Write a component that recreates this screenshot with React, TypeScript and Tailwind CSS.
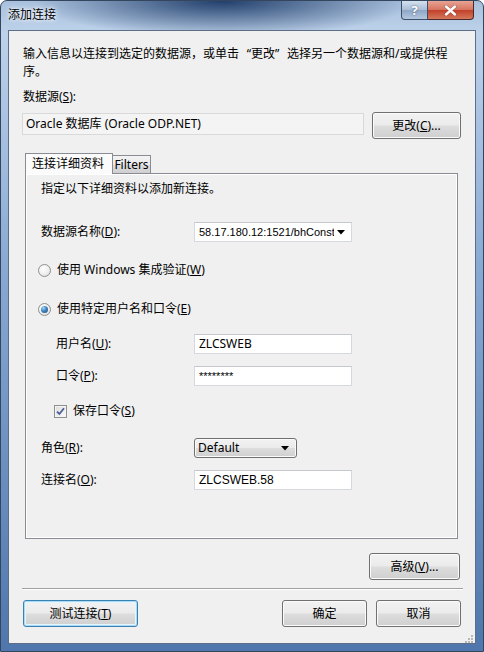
import React from 'react';

function Btn({ children, className = '', focused = false }: { children: React.ReactNode; className?: string; focused?: boolean }) {
  return (
    <div
      className={
        'flex h-[27px] items-center justify-center rounded-[3px] border text-[12px] text-black bg-[linear-gradient(to_bottom,#f2f2f2_0%,#ebebeb_48%,#dddddd_52%,#cfcfcf_100%)] ' +
        (focused
          ? 'border-[#3c7fb1] shadow-[inset_0_0_0_1px_#a6dcf5,inset_0_0_0_2px_#e6f5fc] '
          : 'border-[#707070] shadow-[inset_0_0_0_1px_#fbfbfb] ') +
        className
      }
    >
      {children}
    </div>
  );
}

function TextBox({ children, className = '' }: { children: React.ReactNode; className?: string }) {
  return (
    <div className={'flex h-[20px] w-[158px] items-center border border-[#d5d9de] border-t-[#c4c8ce] bg-white pl-[4px] ' + className}>
      {children}
    </div>
  );
}

function Row({ label, indent = false, children, className = '' }: { label: React.ReactNode; indent?: boolean; children: React.ReactNode; className?: string }) {
  return (
    <div className={'flex h-[20px] items-center ' + className}>
      <div className={'w-[153px] leading-[18px] ' + (indent ? 'pl-[15px]' : '')}>{label}</div>
      {children}
    </div>
  );
}

function Arrow() {
  return (
    <svg width="8" height="5" viewBox="0 0 8 5" className="shrink-0">
      <path d="M0 0H8L4 4.5Z" fill="#000" />
    </svg>
  );
}

function Radio({ checked }: { checked?: boolean }) {
  return (
    <div className="flex h-[13px] w-[13px] items-center justify-center rounded-full border border-[#8e8f8f] bg-[radial-gradient(circle_at_40%_35%,#ffffff_0%,#f0f0f0_50%,#d6d6d6_100%)]">
      {checked && (
        <div className="h-[7px] w-[7px] rounded-full bg-[radial-gradient(circle_at_35%_30%,#a6d6f5_0%,#3e83c0_45%,#1c4a78_100%)]" />
      )}
    </div>
  );
}

function Check() {
  return (
    <div className="flex h-[13px] w-[13px] items-center justify-center border border-[#8e8f8f] bg-[linear-gradient(135deg,#dcdcdc_0%,#fafafa_100%)] shadow-[inset_0_0_0_1px_#f4f4f4]">
      <svg width="9" height="9" viewBox="0 0 9 9">
        <path d="M1 4.6L3.4 7L8 1.2" fill="none" stroke="#4a5f97" strokeWidth="1.8" />
      </svg>
    </div>
  );
}

export default function App() {
  return (
    <div className="h-[652px] w-[484px] overflow-hidden rounded-t-[7px] border border-[#34465e] bg-[radial-gradient(ellipse_190px_36px_at_46%_0%,rgba(22,52,98,0.92),rgba(22,52,98,0)),linear-gradient(to_bottom,#a9c1de_0%,#bed2ea_5%,#8aaad4_40%,#4f77ad_100%)] font-['Noto_Sans','Noto_Sans_CJK_SC',sans-serif] text-[12px] text-black">
      {/* title bar */}
      <div className="flex h-[29px] items-start justify-between">
        <div className="pl-[7px] pt-[5px] leading-[18px] text-[12px] text-black [text-shadow:0_0_6px_#ffffff,0_0_3px_#ffffff]">添加连接</div>
        <div className="mr-[9px] flex h-[19px]">
          <div className="flex w-[27px] items-center justify-center rounded-bl-[4px] border border-t-0 border-[#3c4f6a] bg-[linear-gradient(to_bottom,#d4e0ee_0%,#a9bdd6_50%,#8ea7c6_52%,#b4c8df_100%)] text-[13px] font-bold leading-none text-white [text-shadow:0_0_2px_#3a4f6e]">
            ?
          </div>
          <div className="flex w-[46px] items-center justify-center rounded-br-[4px] border border-l-0 border-t-0 border-[#4a2a2a] bg-[linear-gradient(to_bottom,#e8a493_0%,#d77460_48%,#c2412b_52%,#d5795a_100%)]">
            <svg width="13" height="11" viewBox="0 0 13 11">
              <path d="M2 1.5L11 9.5M11 1.5L2 9.5" stroke="#3a1a1a" strokeWidth="3.4" strokeLinecap="round" opacity="0.35" />
              <path d="M2 1.5L11 9.5M11 1.5L2 9.5" stroke="#ffffff" strokeWidth="2.4" strokeLinecap="round" />
            </svg>
          </div>
        </div>
      </div>

      {/* client area */}
      <div className="mx-[7px] flex h-[614px] flex-col border border-[#5c6f87] bg-[#f0f0f0] px-[14px] pt-[14px]">
        <div className="whitespace-nowrap leading-[18px]">
          输入信息以连接到选定的数据源，或单击<span className="inline-block w-[12px] text-right">“</span>更改
          <span className="inline-block w-[12px] text-left">”</span>选择另一个数据源和/或提供程
          <br />
          序。
        </div>
        <div className="mt-[7px] leading-[18px]">
          数据源(<u>S</u>):
        </div>
        <div className="mt-[6px] flex items-start justify-between">
          <div className="-ml-px mt-px flex h-[22px] w-[342px] items-center border border-[#d9d9d9] bg-[#f4f4f4] pl-[3px]">
            Oracle 数据库 (Oracle ODP.NET)
          </div>
          <Btn className="w-[89px]">
            更改(<u>C</u>)...
          </Btn>
        </div>

        {/* tabs */}
        <div className="ml-[2px] mt-[14px] w-[433px]">
          <div className="flex h-[20px] items-end">
            <div className="relative z-10 -mb-px flex h-[21px] w-[88px] items-start border border-b-0 border-[#898c95] bg-[#fbfbfb] pl-[6px] pt-[1px] leading-[18px]">
              连接详细资料
            </div>
            <div className="flex h-[18px] w-[38px] items-center justify-center border border-l-0 border-b-0 border-[#898c95] bg-[linear-gradient(to_bottom,#f3f3f3_0%,#ebebeb_50%,#dddddd_52%,#cfcfcf_100%)] leading-[16px]">
              Filters
            </div>
          </div>
          <div className="flex h-[366px] flex-col border border-[#898c95] bg-[#f0f0f0] pl-[15px] pt-[6px] shadow-[inset_0_0_0_1px_#ffffff]">
            <div className="leading-[18px]">指定以下详细资料以添加新连接。</div>
            <Row className="mt-[24px]" label={<>数据源名称(<u>D</u>):</>}>
              <TextBox className="gap-[3px] pl-[2px] pr-[6px] font-['Liberation_Sans',sans-serif] text-[11px]">
                <span className="min-w-0 flex-1 overflow-hidden whitespace-nowrap">58.17.180.12:1521/bhConst</span>
                <Arrow />
              </TextBox>
            </Row>
            <div className="-ml-[3px] mt-[19px] flex h-[18px] items-center gap-[6px]">
              <Radio />
              <span className="leading-[18px]">
                使用 Windows 集成验证(<u>W</u>)
              </span>
            </div>
            <div className="-ml-[3px] mt-[21px] flex h-[18px] items-center gap-[6px]">
              <Radio checked />
              <span className="leading-[18px]">
                使用特定用户名和口令(<u>E</u>)
              </span>
            </div>
            <Row className="mt-[16px]" indent label={<>用户名(<u>U</u>):</>}>
              <TextBox>ZLCSWEB</TextBox>
            </Row>
            <Row className="mt-[12px]" indent label={<>口令(<u>P</u>):</>}>
              <TextBox className="items-start pt-[1px] font-['Liberation_Sans',sans-serif] text-[11px]">********</TextBox>
            </Row>
            <div className="ml-[13px] mt-[16px] flex h-[18px] items-center gap-[6px]">
              <Check />
              <span className="leading-[18px]">
                保存口令(<u>S</u>)
              </span>
            </div>
            <Row className="mt-[18px]" label={<>角色(<u>R</u>):</>}>
              <div className="flex h-[20px] w-[103px] items-center justify-between rounded-[3px] border border-[#707070] bg-[linear-gradient(to_bottom,#f2f2f2_0%,#ebebeb_48%,#dddddd_52%,#cfcfcf_100%)] pl-[3px] pr-[7px] shadow-[inset_0_0_0_1px_#fbfbfb]">
                <span>Default</span>
                <Arrow />
              </div>
            </Row>
            <Row className="mt-[12px]" label={<>连接名(<u>O</u>):</>}>
              <TextBox className="font-['Liberation_Sans',sans-serif]">ZLCSWEB.58</TextBox>
            </Row>
          </div>
        </div>

        <div className="mt-[14px] flex justify-end">
          <Btn className="mr-px w-[91px]">
            高级(<u>V</u>)...
          </Btn>
        </div>
        <div className="-ml-px -mr-[2px] mt-[8px] h-[2px] border-t border-[#a0a0a0] border-b border-b-white" />
        <div className="mt-[10px] flex items-start">
          <Btn focused className="w-[115px]">
            测试连接(<u>T</u>)
          </Btn>
          <div className="flex-1" />
          <Btn className="w-[85px]">确定</Btn>
          <Btn className="ml-[9px] w-[85px]">取消</Btn>
        </div>
        <div className="-mr-[13px] mt-[7px] flex justify-end">
          <svg width="10" height="10" viewBox="0 0 10 10">
            <g fill="#b8b8b8">
              <rect x="7" y="1" width="2" height="2" />
              <rect x="4" y="4" width="2" height="2" />
              <rect x="7" y="4" width="2" height="2" />
              <rect x="1" y="7" width="2" height="2" />
              <rect x="4" y="7" width="2" height="2" />
              <rect x="7" y="7" width="2" height="2" />
            </g>
          </svg>
        </div>
      </div>
    </div>
  );
}
